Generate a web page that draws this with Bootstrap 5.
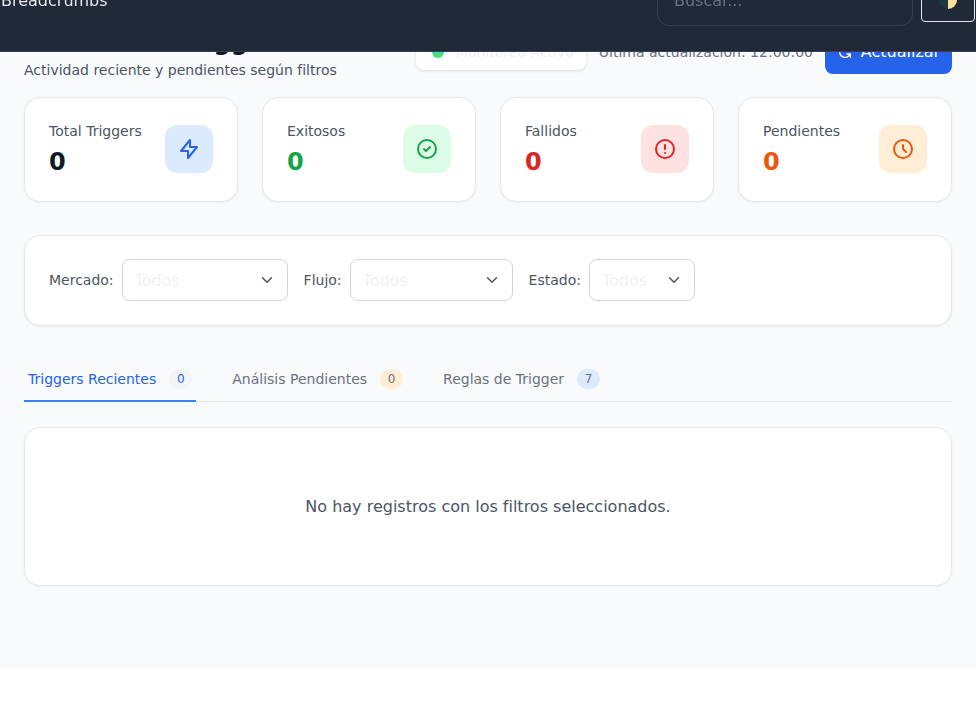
<!DOCTYPE html>
<html lang="es">
<head>
<meta charset="utf-8">
<title>Monitor de Triggers</title>
<link href="https://cdn.jsdelivr.net/npm/bootstrap@5.3.0/dist/css/bootstrap.min.css" rel="stylesheet">
<style>
html,body{height:100%}
body{font-family:"DejaVu Sans",sans-serif;background:#fff;color:#111827;overflow:hidden}
.top-strip{height:52px;background:#1f2937;border-bottom:1px solid #374151;padding:0 1px 25px 1px;align-items:flex-end;flex-wrap:nowrap}
.crumb-text{color:#e5e7eb;font-size:16px;line-height:24px;margin-right:auto;margin-bottom:13px}
.search-box{width:256px;height:52px;background:transparent;border:1px solid #374151;border-radius:12px;color:#fff;padding:8px 16px;font-size:16px}
.search-box::placeholder{color:#6b7280;opacity:1}
.search-box:focus{background:transparent;color:#fff;border-color:#374151;box-shadow:none}
.theme-btn{width:54px;height:44px;margin-left:8px;margin-bottom:4px;padding:0;border:1px solid #e5e7eb;border-radius:4px;background:transparent;display:flex;align-items:center;justify-content:center}
.page-shell{height:668px;background:#f8fafc;padding:26px 24px 0}
.head-row{height:54px;margin-bottom:17px}
.page-title{font-size:24px;font-weight:700;line-height:32px;margin:0;color:#111827}
.page-sub{font-size:14px;line-height:20px;color:#4b5563;margin:2px 0 0}
.live-pill{height:36px;margin-top:-2px;background:#fff;border-radius:8px;box-shadow:0 1px 3px rgba(0,0,0,.12);padding:0 16px;font-size:14px;color:#edeef0;gap:12px;width:170px;white-space:nowrap}
.live-dot{width:12px;height:12px;border-radius:50%;background:#4ade80;flex:none}
.stamp{font-size:14px;color:#6b7280;margin:-1px 12px 0 13px;white-space:nowrap}
.refresh-btn{height:44px;width:127px;background:#2563eb;border:0;border-radius:8px;color:#fff;font-size:16px;gap:8px;margin-top:-2px;padding:0}
.stat-tile{background:#fff;border:1px solid #e5e7eb;border-radius:16px;box-shadow:0 1px 2px rgba(0,0,0,.05);height:105px;padding:0 24px}
.stat-name{font-size:14px;line-height:20px;color:#4b5563}
.stat-num{font-size:24px;font-weight:700;line-height:32px;margin-top:5px}
.stat-ico{width:48px;height:48px;border-radius:12px;flex:none;margin-bottom:1px}
.ink-dark{color:#111827}.ink-green{color:#16a34a}.ink-red{color:#dc2626}.ink-orange{color:#ea580c}
.bg-ice{background:#dbeafe}.bg-mint{background:#dcfce7}.bg-rose{background:#fee2e2}.bg-peach{background:#ffedd5}
.filter-panel{margin-top:33px;height:91px;background:#fff;border:1px solid #e5e7eb;border-radius:16px;box-shadow:0 1px 2px rgba(0,0,0,.05);padding:0 24px 1px;gap:16px}
.filter-label{font-size:14px;color:#4b5563;margin:0 8px 0 0}
.filter-select{height:42px;border:1px solid #d1d5db;border-radius:8px;color:#f0f1f3;font-size:16px;padding:2px 32px 0 12px;background-color:#fff;background-image:url("data:image/svg+xml,%3csvg xmlns='http://www.w3.org/2000/svg' viewBox='0 0 16 16'%3e%3cpath fill='none' stroke='%234b5563' stroke-linecap='round' stroke-linejoin='round' stroke-width='2' d='m2 5 6 6 6-6'/%3e%3c/svg%3e")}
.w-market{width:166px}.w-flow{width:163px}.w-state{width:106px}
.tab-line{margin-top:32px;border-bottom:1px solid #e5e7eb;height:44px;gap:32px;flex-wrap:nowrap}
.tab-link{height:44px;padding:0 4px;font-size:14px;color:#6b7280;gap:13px;border-bottom:2px solid transparent;text-decoration:none}
.tab-link.is-on{color:#2563eb;border-bottom-color:#3b82f6}
.count-chip{min-width:23px;height:20px;border-radius:10px;font-size:12px;line-height:20px;text-align:center}
.chip-gray{background:#f3f4f6}.chip-peach{background:#ffedd5}.chip-ice{background:#dbeafe}
.empty-panel{margin-top:25px;height:159px;background:#fff;border:1px solid #e5e7eb;border-radius:16px;box-shadow:0 1px 2px rgba(0,0,0,.05);font-size:16px;color:#4b5563}
</style>
</head>
<body>
<nav class="navbar fixed-top top-strip d-flex justify-content-end">
  <span class="crumb-text">Breadcrumbs</span>
  <input class="form-control search-box" type="text" placeholder="Buscar...">
  <button class="theme-btn" type="button" aria-label="Tema">
    <svg width="18" height="18" viewBox="0 0 18 18"><circle cx="9" cy="9" r="9" fill="#1f3a3f"/><path d="M9 0a9 9 0 0 1 0 18z" fill="#fde29b"/></svg>
  </button>
</nav>
<main class="page-shell">
  <div class="d-flex justify-content-between align-items-center head-row">
    <div>
      <h1 class="page-title">Monitor de Triggers</h1>
      <p class="page-sub">Actividad reciente y pendientes según filtros</p>
    </div>
    <div class="d-flex align-items-center">
      <div class="d-flex align-items-center live-pill"><span class="live-dot"></span><span>Monitoreo Activo</span></div>
      <span class="stamp">Última actualización: 12:00:00</span>
      <button class="btn refresh-btn d-flex align-items-center justify-content-center" type="button">
        <svg width="16" height="16" viewBox="0 0 24 24" fill="none" stroke="currentColor" stroke-width="2" stroke-linecap="round" stroke-linejoin="round"><path d="M4 4v5h.582m15.356 2A8.001 8.001 0 0 0 4.582 9m0 0H9m11 11v-5h-.581m0 0a8.003 8.003 0 0 1-15.357-2m15.357 2H15"/></svg>
        Actualizar
      </button>
    </div>
  </div>

  <div class="row g-4">
    <div class="col-3"><div class="stat-tile d-flex align-items-center justify-content-between">
      <div><div class="stat-name">Total Triggers</div><div class="stat-num ink-dark">0</div></div>
      <div class="stat-ico bg-ice d-flex align-items-center justify-content-center">
        <svg width="24" height="24" viewBox="0 0 24 24" fill="none" stroke="#2563eb" stroke-width="2" stroke-linecap="round" stroke-linejoin="round"><path d="M13 10V3L4 14h7v7l9-11h-7z"/></svg>
      </div>
    </div></div>
    <div class="col-3"><div class="stat-tile d-flex align-items-center justify-content-between">
      <div><div class="stat-name">Exitosos</div><div class="stat-num ink-green">0</div></div>
      <div class="stat-ico bg-mint d-flex align-items-center justify-content-center">
        <svg width="24" height="24" viewBox="0 0 24 24" fill="none" stroke="#16a34a" stroke-width="2" stroke-linecap="round" stroke-linejoin="round"><path d="m9 12 2 2 4-4m6 2a9 9 0 1 1-18 0 9 9 0 0 1 18 0z"/></svg>
      </div>
    </div></div>
    <div class="col-3"><div class="stat-tile d-flex align-items-center justify-content-between">
      <div><div class="stat-name">Fallidos</div><div class="stat-num ink-red">0</div></div>
      <div class="stat-ico bg-rose d-flex align-items-center justify-content-center">
        <svg width="24" height="24" viewBox="0 0 24 24" fill="none" stroke="#dc2626" stroke-width="2" stroke-linecap="round" stroke-linejoin="round"><path d="M12 8v4m0 4h.01M21 12a9 9 0 1 1-18 0 9 9 0 0 1 18 0z"/></svg>
      </div>
    </div></div>
    <div class="col-3"><div class="stat-tile d-flex align-items-center justify-content-between">
      <div><div class="stat-name">Pendientes</div><div class="stat-num ink-orange">0</div></div>
      <div class="stat-ico bg-peach d-flex align-items-center justify-content-center">
        <svg width="24" height="24" viewBox="0 0 24 24" fill="none" stroke="#ea580c" stroke-width="2" stroke-linecap="round" stroke-linejoin="round"><path d="M12 8v4l3 3m6-3a9 9 0 1 1-18 0 9 9 0 0 1 18 0z"/></svg>
      </div>
    </div></div>
  </div>

  <div class="filter-panel d-flex align-items-center">
    <div class="d-flex align-items-center"><label class="filter-label">Mercado:</label><select class="form-select filter-select w-market"><option>Todos</option></select></div>
    <div class="d-flex align-items-center"><label class="filter-label">Flujo:</label><select class="form-select filter-select w-flow"><option>Todos</option></select></div>
    <div class="d-flex align-items-center"><label class="filter-label">Estado:</label><select class="form-select filter-select w-state"><option>Todos</option></select></div>
  </div>

  <div class="tab-line d-flex">
    <a class="tab-link is-on d-flex align-items-center" href="#">Triggers Recientes <span class="count-chip chip-gray">0</span></a>
    <a class="tab-link d-flex align-items-center" href="#">Análisis Pendientes <span class="count-chip chip-peach">0</span></a>
    <a class="tab-link d-flex align-items-center" href="#">Reglas de Trigger <span class="count-chip chip-ice">7</span></a>
  </div>

  <div class="empty-panel d-flex align-items-center justify-content-center">No hay registros con los filtros seleccionados.</div>
</main>
<script src="https://cdn.jsdelivr.net/npm/bootstrap@5.3.0/dist/js/bootstrap.bundle.min.js"></script>
</body>
</html>
